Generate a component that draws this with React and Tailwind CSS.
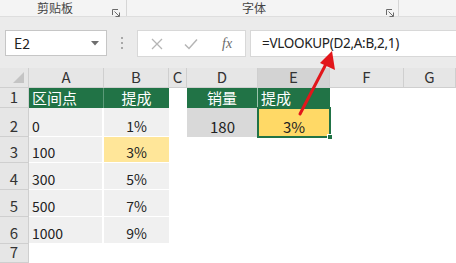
import React from "react";

const GREEN = "bg-[#217346]";

function Launcher() {
  return (
    <svg width="8" height="8" viewBox="0 0 8 8" className="text-[#6b6b6b]">
      <path d="M0.5 6V0.5H6" fill="none" stroke="currentColor" strokeWidth="1" />
      <path d="M2.5 2.5L7 7" fill="none" stroke="currentColor" strokeWidth="1" />
      <path d="M7.5 3.5V7.5H3.5" fill="none" stroke="currentColor" strokeWidth="1" />
    </svg>
  );
}

function ColHead({ children, active }) {
  return (
    <div
      className={
        "flex items-center justify-center border-r border-b border-[#cfcfcf] text-[15px] text-[#333] " +
        (active ? "bg-[#d3d3d3]" : "bg-[#e6e6e6]")
      }
    >
      {children}
    </div>
  );
}

function RowHead({ children }) {
  return (
    <div className="flex items-end justify-center border-r border-b border-[#cfcfcf] bg-[#e6e6e6] text-[15px] text-[#333] leading-none">
      <span className="pb-[3px]">{children}</span>
    </div>
  );
}

function Cell({ children, fill = "", align = "left", text = "text-[#222]", size = "text-[14px]", extra = "" }) {
  const justify = align === "center" ? "justify-center" : "justify-start pl-[3px]";
  return (
    <div className={`flex items-end pb-[3px] leading-none ${justify} ${fill} ${text} ${size} ${extra}`}>
      {children}
    </div>
  );
}

const rows = [
  ["100", "3%"],
  ["300", "5%"],
  ["500", "7%"],
  ["1000", "9%"],
];

export default function App() {
  return (
    <div className="relative w-[456px] h-[263px] overflow-hidden bg-[#ebebeb] font-['Noto_Sans_CJK_SC','Noto_Sans',sans-serif]">
      {/* ribbon group labels */}
      <div className="flex h-[17px] bg-[#f4f4f4] border-b border-[#dedede] text-[12px] text-[#444] leading-none">
        <div className="relative flex w-[127px] items-center border-r border-[#d6d6d6]">
          <span className="pl-[37px]">剪贴板</span>
          <span className="absolute right-[6px] top-[9px]"><Launcher /></span>
        </div>
        <div className="relative flex w-[272px] items-center border-r border-[#d6d6d6]">
          <span className="pl-[115px]">字体</span>
          <span className="absolute right-[4px] top-[9px]"><Launcher /></span>
        </div>
        <div className="flex-1" />
      </div>

      {/* formula bar */}
      <div className="flex h-[51px] items-start pt-[13px]">
        <div className="ml-[5px] flex h-[26px] w-[102px] items-center justify-between border border-[#c6c6c6] bg-white pl-[8px] pr-[7px]">
          <span className="text-[14px] text-[#222]">E2</span>
          <svg width="8" height="5" viewBox="0 0 8 5"><path d="M0 0H8L4 4.5Z" fill="#6e6e6e" /></svg>
        </div>
        <div className="flex h-[26px] w-[30px] flex-col items-center justify-center gap-[3px]">
          <span className="h-[2px] w-[2px] bg-[#a8a8a8]" />
          <span className="h-[2px] w-[2px] bg-[#a8a8a8]" />
          <span className="h-[2px] w-[2px] bg-[#a8a8a8]" />
        </div>
        <div className="flex h-[27px] w-[109px] items-center border border-[#d8d8d8] bg-white pl-[13px]">
          <svg width="12" height="12" viewBox="0 0 12 12">
            <path d="M1 1L11 11M11 1L1 11" stroke="#b5b5b5" strokeWidth="1.3" />
          </svg>
          <svg width="14" height="12" viewBox="0 0 14 12" className="ml-[21px]">
            <path d="M1 6.5L5 10.5L13 1.5" fill="none" stroke="#b5b5b5" strokeWidth="1.5" />
          </svg>
          <span className="ml-[24px] font-['Liberation_Serif',serif] text-[14px] italic text-[#6a6a6a]">fx</span>
        </div>
        <div className="ml-[4px] flex h-[27px] flex-1 items-center border border-r-0 border-[#d8d8d8] bg-white pl-[11px]">
          <span className="font-['Noto_Sans',sans-serif] text-[13.5px] text-[#222] tracking-[-0.3px]">=VLOOKUP(D2,A:B,2,1)</span>
        </div>
      </div>

      {/* sheet */}
      <div className="grid grid-cols-[29px_75px_65px_18px_71px_72px_74px_52px] grid-rows-[20px_20px_29px_26px_27px_27px_27px_19px] bg-white">
        {/* header row */}
        <div className="flex items-end justify-end border-r border-b border-[#cfcfcf] bg-[#e6e6e6] pr-[4px] pb-[4px]">
          <svg width="11" height="11" viewBox="0 0 11 11"><path d="M11 0V11H0Z" fill="#c4c4c4" /></svg>
        </div>
        <ColHead>A</ColHead>
        <ColHead>B</ColHead>
        <ColHead>C</ColHead>
        <ColHead>D</ColHead>
        <ColHead active>E</ColHead>
        <ColHead>F</ColHead>
        <ColHead>G</ColHead>

        {/* row 1 */}
        <RowHead>1</RowHead>
        <Cell fill={GREEN} text="text-white" size="text-[15px]" extra="border-r border-[#5b9a78]">区间点</Cell>
        <Cell fill={GREEN} text="text-white" size="text-[15px]" align="center">提成</Cell>
        <Cell />
        <Cell fill={GREEN} text="text-white" size="text-[15px]" align="center" extra="border-r border-[#9cc4ad]">销量</Cell>
        <Cell fill={GREEN} text="text-white" size="text-[15px]">提成</Cell>
        <Cell />
        <Cell />

        {/* row 2 */}
        <RowHead>2</RowHead>
        <Cell fill="bg-[#f0f0f0]" extra="border-r-2 border-b border-white">0</Cell>
        <Cell fill="bg-[#f0f0f0]" align="center" extra="border-b border-white">1%</Cell>
        <Cell />
        <Cell fill="bg-[#d9d9d9]" align="center" size="text-[15px]">180</Cell>
        <div className="relative -m-[1px] flex items-end justify-center border-2 border-[#217346] bg-[#ffd966] pb-[2px] text-[15px] leading-none text-[#222]">
          3%
          <span className="absolute -right-[4px] -bottom-[4px] h-[6px] w-[6px] border border-white bg-[#217346]" />
        </div>
        <Cell />
        <Cell />

        {/* rows 3-6 */}
        {rows.map(([a, b], i) => (
          <React.Fragment key={a}>
            <RowHead>{i + 3}</RowHead>
            <Cell fill="bg-[#f0f0f0]" extra="border-r-2 border-b border-white">{a}</Cell>
            <Cell
              fill={i === 0 ? "bg-[#ffe699]" : "bg-[#f0f0f0]"}
              align="center"
              extra="border-b border-white"
            >
              {b}
            </Cell>
            <Cell />
            <Cell />
            <Cell />
            <Cell />
            <Cell />
          </React.Fragment>
        ))}

        {/* row 7 */}
        <RowHead>7</RowHead>
        <Cell />
        <Cell />
        <Cell />
        <Cell />
        <Cell />
        <Cell />
        <Cell />
      </div>

      {/* red pointer from the result cell up to the formula */}
      <svg className="pointer-events-none absolute inset-0" width="456" height="263" viewBox="0 0 456 263">
        <line x1="300" y1="114" x2="326" y2="64" stroke="#e2161b" strokeWidth="3" strokeLinecap="round" />
        <path d="M332 51L335 70L320 63Z" fill="#e2161b" />
      </svg>
    </div>
  );
}
